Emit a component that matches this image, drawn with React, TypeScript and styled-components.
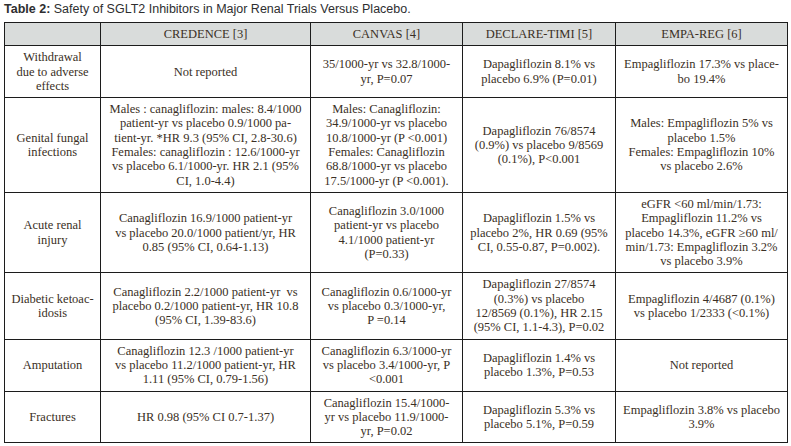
import React from "react";
import styled, { createGlobalStyle } from "styled-components";

const GlobalStyle = createGlobalStyle`
  html, body {
    margin: 0;
    padding: 0;
    background: #ffffff;
  }
`;

const Page = styled.div`
  width: 791px;
  height: 446px;
  box-sizing: border-box;
  padding: 2px 0 0 4px;
  background: #ffffff;
  display: flex;
  flex-direction: column;
  gap: 5px;
`;

const Caption = styled.div`
  font-family: "Liberation Sans", Arial, sans-serif;
  font-size: 12.5px;
  line-height: 15px;
  color: #2e2e30;
  white-space: nowrap;
  padding-left: 0px;
`;

const CaptionLabel = styled.span`
  font-weight: bold;
`;

const Table = styled.table`
  border-collapse: collapse;
  table-layout: fixed;
  width: 783px;
  font-family: "Liberation Serif", "Times New Roman", serif;
  font-size: 12.5px;
  line-height: 14.3px;
  color: #3a2f25;
`;

const HeadCell = styled.th`
  background: #d9dcdb;
  border: 1px solid #1c1c1c;
  font-weight: normal;
  text-align: center;
  vertical-align: middle;
  padding: 4px 3px;
  white-space: nowrap;
`;

const Cell = styled.td`
  border: 1px solid #1c1c1c;
  text-align: center;
  vertical-align: middle;
  padding: 4px 3px;
`;

const Line = styled.span`
  display: block;
  white-space: pre;
`;

const columns = [96, 210, 152, 153, 172];
const headers = ["", "CREDENCE [3]", "CANVAS [4]", "DECLARE-TIMI [5]", "EMPA-REG [6]"];

const rows: string[][][] = [
  [
    ["Withdrawal", "due to adverse", "effects"],
    ["Not reported"],
    ["35/1000-yr vs 32.8/1000-", "yr, P=0.07"],
    ["Dapagliflozin 8.1% vs", "placebo 6.9% (P=0.01)"],
    ["Empagliflozin 17.3% vs place-", "bo 19.4%"],
  ],
  [
    ["Genital fungal", "infections"],
    [
      "Males : canagliflozin: males: 8.4/1000",
      "patient-yr vs placebo 0.9/1000 pa-",
      "tient-yr. *HR 9.3 (95% CI, 2.8-30.6)",
      "Females: canagliflozin : 12.6/1000-yr",
      "vs placebo 6.1/1000-yr. HR 2.1 (95%",
      "CI, 1.0-4.4)",
    ],
    [
      "Males: Canagliflozin:",
      "34.9/1000-yr vs placebo",
      "10.8/1000-yr (P <0.001)",
      "Females: Canagliflozin",
      "68.8/1000-yr vs placebo",
      "17.5/1000-yr (P <0.001).",
    ],
    ["Dapagliflozin 76/8574", "(0.9%) vs placebo 9/8569", "(0.1%), P<0.001"],
    ["Males: Empagliflozin 5% vs", "placebo 1.5%", "Females: Empagliflozin 10%", "vs placebo 2.6%"],
  ],
  [
    ["Acute renal", "injury"],
    [
      "Canagliflozin 16.9/1000 patient-yr",
      "vs placebo 20.0/1000 patient/yr, HR",
      "0.85 (95% CI, 0.64-1.13)",
    ],
    ["Canagliflozin 3.0/1000", "patient-yr vs placebo", "4.1/1000 patient-yr", "(P=0.33)"],
    ["Dapagliflozin 1.5% vs", "placebo 2%, HR 0.69 (95%", "CI, 0.55-0.87, P=0.002)."],
    [
      "eGFR <60 ml/min/1.73:",
      "Empagliflozin 11.2% vs",
      "placebo 14.3%, eGFR \u226560 ml/",
      "min/1.73: Empagliflozin 3.2%",
      "vs placebo 3.9%",
    ],
  ],
  [
    ["Diabetic ketoac-", "idosis"],
    [
      "Canagliflozin 2.2/1000 patient-yr  vs",
      "placebo 0.2/1000 patient-yr, HR 10.8",
      "(95% CI, 1.39-83.6)",
    ],
    ["Canagliflozin 0.6/1000-yr", "vs placebo 0.3/1000-yr,", "P =0.14"],
    ["Dapagliflozin 27/8574", "(0.3%) vs placebo", "12/8569 (0.1%), HR 2.15", "(95% CI, 1.1-4.3), P=0.02"],
    ["Empagliflozin 4/4687 (0.1%)", "vs placebo 1/2333 (<0.1%)"],
  ],
  [
    ["Amputation"],
    [
      "Canagliflozin 12.3 /1000 patient-yr",
      "vs placebo 11.2/1000 patient-yr, HR",
      "1.11 (95% CI, 0.79-1.56)",
    ],
    ["Canagliflozin 6.3/1000-yr", "vs placebo 3.4/1000-yr, P", "<0.001"],
    ["Dapagliflozin 1.4% vs", "placebo 1.3%, P=0.53"],
    ["Not reported"],
  ],
  [
    ["Fractures"],
    ["HR 0.98 (95% CI 0.7-1.37)"],
    ["Canagliflozin 15.4/1000-", "yr vs placebo 11.9/1000-", "yr, P=0.02"],
    ["Dapagliflozin 5.3% vs", "placebo 5.1%, P=0.59"],
    ["Empagliflozin 3.8% vs placebo", "3.9%"],
  ],
];

export default function App() {
  return (
    <>
      <GlobalStyle />
      <Page>
        <Caption>
          <CaptionLabel>Table 2:</CaptionLabel> Safety of SGLT2 Inhibitors in Major Renal Trials Versus Placebo.
        </Caption>
        <Table>
          <colgroup>
            {columns.map((w, i) => (
              <col key={i} style={{ width: w }} />
            ))}
          </colgroup>
          <thead>
            <tr>
              {headers.map((h, i) => (
                <HeadCell key={i}>{h}</HeadCell>
              ))}
            </tr>
          </thead>
          <tbody>
            {rows.map((row, r) => (
              <tr key={r}>
                {row.map((lines, c) => (
                  <Cell key={c}>
                    {lines.map((l, k) => (
                      <Line key={k}>{l}</Line>
                    ))}
                  </Cell>
                ))}
              </tr>
            ))}
          </tbody>
        </Table>
      </Page>
    </>
  );
}
